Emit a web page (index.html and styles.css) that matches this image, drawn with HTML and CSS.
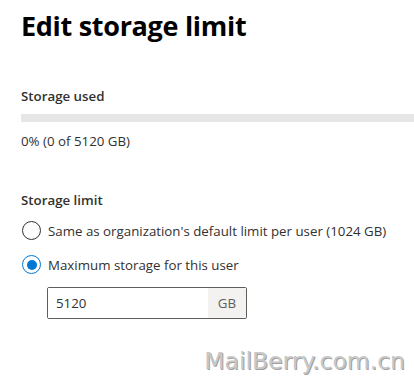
FILE: index.html
```html
<!DOCTYPE html>
<html lang="en">
<head>
  <meta charset="UTF-8" />
  <meta name="viewport" content="width=device-width, initial-scale=1.0"/>
  <title>Edit storage limit</title>
  <link rel="stylesheet" href="styles.css">
</head>
<body>
  <div class="panel">
    <h1>Edit storage limit</h1>

    <!-- storage used -->
    <div class="section used">
      <div class="label">Storage used</div>
      <div class="bar"><div class="bar-fill"></div></div>
      <div class="used-text">0% (0 of 5120 GB)</div>
    </div>

    <!-- storage limit -->
    <div class="section limit">
      <div class="label">Storage limit</div>
      <label class="radio">
        <span class="circle"></span>
        <span>Same as organization's default limit per user (1024 GB)</span>
      </label>
      <label class="radio checked">
        <span class="circle"></span>
        <span>Maximum storage for this user</span>
      </label>
      <div class="field">
        <input type="text" value="5120">
        <span class="suffix">GB</span>
      </div>
    </div>
  </div>

  <div class="watermark">MailBerry.com.cn</div>
</body>
</html>
```

FILE: styles.css
```css
html, body {
  margin: 0; padding: 0;
  height: 100%;
}
body {
  font-family: "Open Sans", "Noto Sans", Arial, sans-serif;
  background: #fff;
  color: #323130;
  position: relative;
  overflow: hidden;
}

.panel {
  padding: 7px 0 0 21px;
}
h1 {
  margin: 0;
  font-size: 27px;
  font-weight: 700;
  color: #000;
  letter-spacing: -0.3px;
}

.label {
  font-size: 13.3px;
  font-weight: 600;
  color: #323130;
}
.used {
  margin-top: 43px;
}
.bar {
  margin-top: 9px;
  height: 8px;
  background: #e6e6e6;
}
.used-text {
  margin-top: 10px;
  font-size: 13.3px;
}

.limit {
  margin-top: 41px;
}
.radio {
  display: flex;
  align-items: center;
  gap: 7px;
  font-size: 13.3px;
  margin-top: 9px;
  height: 25px;
}
.radio + .radio {
  margin-top: 9px;
}
.circle {
  width: 19px; height: 19px;
  border: 1px solid #323130;
  border-radius: 50%;
  box-sizing: border-box;
  flex: none;
  position: relative;
  margin-left: 1px;
}
.radio.checked .circle {
  border-color: #0078d4;
}
.radio.checked .circle::after {
  content: "";
  position: absolute;
  top: 3.5px; left: 3.5px;
  width: 10px; height: 10px;
  border-radius: 50%;
  background: #0078d4;
}

.field {
  margin: 10px 0 0 26px;
  width: 200px;
  height: 32px;
  border: 1px solid #605e5c;
  border-radius: 2px;
  box-sizing: border-box;
  display: flex;
}
.field input {
  flex: 1;
  min-width: 0;
  border: none;
  outline: none;
  padding: 0 8px;
  font: 13.3px "Open Sans", "Noto Sans", Arial, sans-serif;
  color: #323130;
}
.suffix {
  width: 38px;
  background: #f3f2f1;
  display: flex;
  align-items: center;
  justify-content: center;
  font-size: 13.3px;
  color: #605e5c;
}

/* 浮水印 */
.watermark {
  position: absolute;
  right: 9px; bottom: 6px;
  font-family: "DejaVu Sans", sans-serif;
  font-size: 23.5px;
  color: #c8c8c8;
  text-shadow: 1px 1px 0 #a0a0a0, -1px -1px 0 #fff;
}
```
